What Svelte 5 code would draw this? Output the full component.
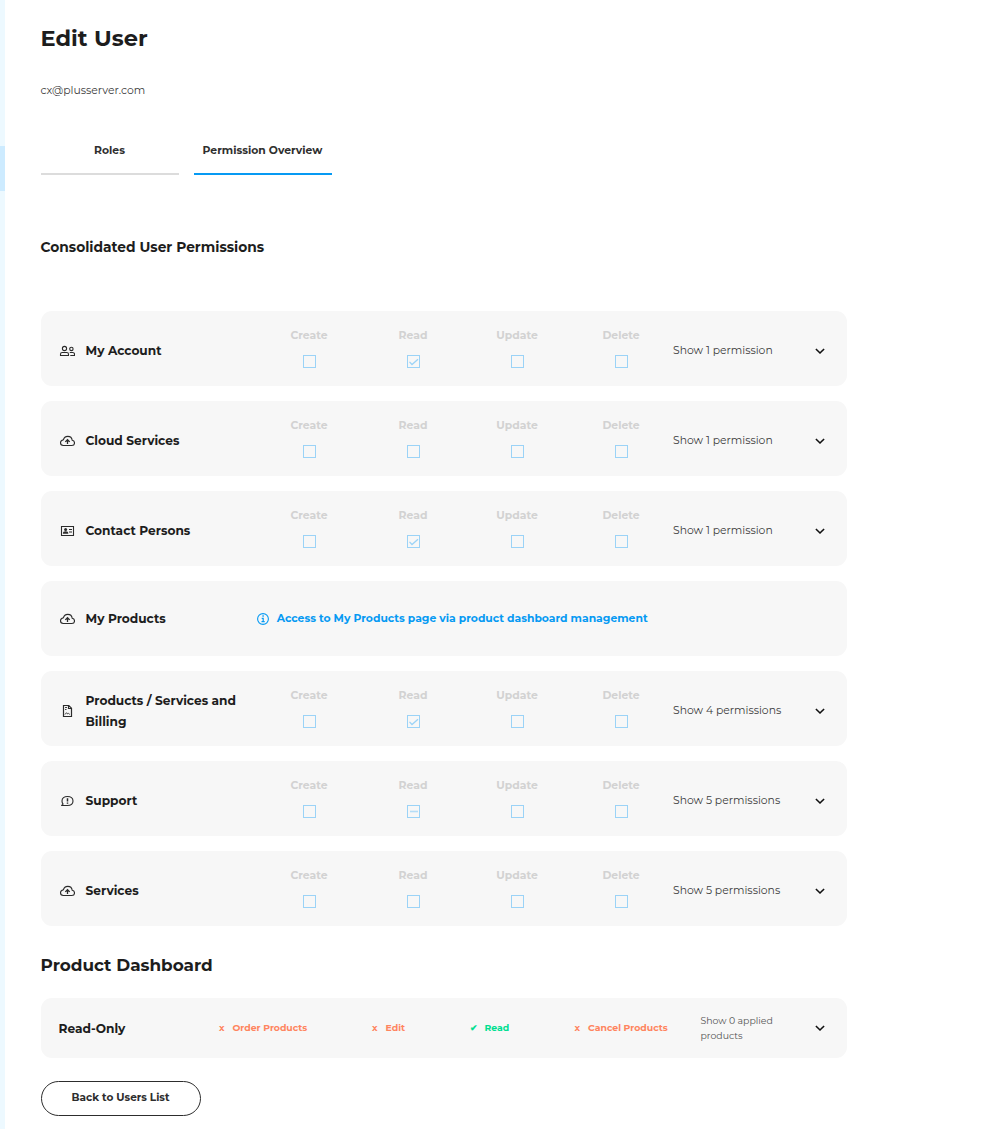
<script>
  const actions = ['Create', 'Read', 'Update', 'Delete'];
  const groups = [
    { name: 'My Account', icon: 'users', read: 'on', count: '1 permission' },
    { name: 'Cloud Services', icon: 'cloud', read: '', count: '1 permission' },
    { name: 'Contact Persons', icon: 'card', read: 'on', count: '1 permission' },
    { name: 'My Products', icon: 'cloud', note: 'Access to My Products page via product dashboard management' },
    { name: 'Products / Services and Billing', icon: 'bill', read: 'on', count: '4 permissions' },
    { name: 'Support', icon: 'support', read: 'some', count: '5 permissions' },
    { name: 'Services', icon: 'cloud', read: '', count: '5 permissions' }
  ];
</script>

{#snippet glyph(kind)}
  <svg class="glyph" width="16" height="16" viewBox="0 0 16 16" fill="none" stroke="#2b2b2b" stroke-width="1.1">
    {#if kind === 'users'}
      <circle cx="5.500" cy="5.500" r="2.100" />
      <circle cx="12.400" cy="5.900" r="1.700" />
      <path d="M1.500 12.500v-1.300q0-1.700 1.700-1.700h4.600q1.700 0 1.700 1.700v1.300zM10.800 9.500h2.900q1.800 0 1.800 1.700v1.300h-4.200" />
    {:else if kind === 'cloud'}
      <path d="M4.300 12.500h8.600c1.600 0 2.600-1 2.600-2.500s-1-2.500-2.300-2.700C12.900 4.900 11.100 3.400 8.800 3.400c-2.200 0-3.900 1.300-4.400 3.400C2.500 7.300 1.500 8.400 1.500 9.800c0 1.700 1.100 2.700 2.800 2.700z" />
      <path d="M8.500 11V7M6.300 8.900l2.200-2.200 2.200 2.200" stroke-width="1.300" />
    {:else if kind === 'card'}
      <path d="M2.500 3.500h12v9h-12z" />
      <path d="M10 6.500h3M10 9h3" />
      <circle cx="6.600" cy="6.400" r="1.500" fill="#2b2b2b" stroke="none" />
      <path d="M3.900 10.700q0-2.400 2.700-2.400t2.700 2.400z" fill="#2b2b2b" stroke="none" />
    {:else if kind === 'bill'}
      <path d="M4.500 2.500h5.300l2.700 2.700v8.300h-8zM9.500 2.500v3h3" stroke-width="1.200" />
      <path d="M6 4.500h2M6 6.500h1.500M6 11.500l1.500-1.800 1.200 1.300.8-.6 1.300 1" stroke-width=".9" />
    {:else}
      <path d="M2.200 12.500h6.100c3.500 0 5.700-1.900 5.700-4.500S11.800 3.500 8.500 3.500 3 5.400 3 8c0 1.300.4 2.300 1.100 3.100q-.5 1.100-1.900 1.400z" />
      <path d="M8.500 5.200v3.300M8.500 9.500v1.300" stroke-width="1.500" />
    {/if}
  </svg>
{/snippet}

{#snippet chevron()}
  <svg class="chevron" width="10" height="7" viewBox="0 0 10 7" fill="none" stroke="#111" stroke-width="1.600">
    <path d="M.9 1L5 5l4.100-4" />
  </svg>
{/snippet}

<div class="page">
  <aside><div class="current"></div></aside>
  <main>
    <h1>Edit User</h1>
    <p class="email">cx@plusserver.com</p>
    <nav>
      <a class="tab"><span>Roles</span></a>
      <a class="tab active"><span>Permission Overview</span></a>
    </nav>
    <h3>Consolidated User Permissions</h3>

    <section class="groups">
      {#each groups as g}
        <article class="card" class:plain={g.note}>
          <div class="name">
            {@render glyph(g.icon)}
            <strong>{g.name}</strong>
          </div>
          {#if g.note}
            <div class="note">
              <svg width="12" height="12" viewBox="0 0 12 12" fill="none" stroke="#069af3">
                <circle cx="6" cy="6" r="5.400" stroke-width="1.100" />
                <path d="M4.700 5.300h1.500v3.400M4.500 8.600h3.200" stroke-width="1.200" />
                <path d="M5.400 3.100h1.400" stroke-width="1.500" />
              </svg>
              <span>{g.note}</span>
            </div>
          {:else}
            {#each actions as a}
              <div class="action">
                <span>{a}</span>
                <i class="box">
                  {#if a === 'Read' && g.read}
                    <svg width="11" height="11" viewBox="0 0 11 11" fill="none" stroke="#9bd3f7">
                      {#if g.read === 'on'}
                        <path d="M1.500 5.900l2.500 2.600L10 3.200" stroke-width="1.300" />
                      {:else}
                        <path d="M2 5.500h8" stroke-width="1.600" stroke="#b5ddf7" />
                      {/if}
                    </svg>
                  {/if}
                </i>
              </div>
            {/each}
            <span class="show">Show {g.count}</span>
            {@render chevron()}
          {/if}
        </article>
      {/each}
    </section>

    <h2>Product Dashboard</h2>
    <article class="card role">
      <strong>Read-Only</strong>
      <span class="flag order"><b>x</b><span>Order Products</span></span>
      <span class="flag edit"><b>x</b><span>Edit</span></span>
      <span class="flag yes"><b>✔</b><span>Read</span></span>
      <span class="flag cancel"><b>x</b><span>Cancel Products</span></span>
      <span class="applied">Show 0 applied<br />products</span>
      {@render chevron()}
    </article>
    <button>Back to Users List</button>
  </main>
</div>

<style>
  :global(body) { background: #fff; }
  .page {
    display: flex; height: 1129px; overflow: hidden; color: #1d1d1d;
    font-family: Montserrat, Inter, sans-serif; white-space: nowrap;
  }
  aside { flex: none; width: 5px; background: #edf9ff; padding-top: 146px; box-sizing: border-box; }
  .current { height: 45px; background: #cdebff; }
  main { width: 806px; padding: 24px 0 0 36px; }
  h1, h2, h3, p { margin: 0 0 0 -.5px; }
  h1 { font-size: 22.500px; line-height: 28px; font-weight: 700; }
  .email { margin-top: 31px; font-size: 10.820px; line-height: 16px; color: #3c3c3c; }
  nav { display: flex; gap: 15px; margin-top: 41px; }
  .tab {
    width: 138px; height: 35px; box-sizing: border-box; border-bottom: 2px solid #dcdcdc; padding: 1px 1px 0 0;
    text-align: center; font-size: 10.820px; line-height: 20px; font-weight: 700; color: #2f2f2f;
  }
  .tab.active { border-color: #069af3; }
  h3 { margin-top: 62px; font-size: 13.800px; line-height: 20px; font-weight: 700; }
  .groups { display: grid; gap: 15px; margin-top: 54px; }
  .card {
    display: flex; align-items: center; height: 75px; box-sizing: border-box;
    padding: 4px 22px 0 18px; border-radius: 11px; background: #f7f7f7;
  }
  .plain { padding-top: 0; }
  .name { display: flex; align-items: center; width: 198px; white-space: normal; }
  .glyph { flex: none; }
  .name strong { margin-left: 10.500px; width: 165px; font-size: 12.200px; line-height: 21px; font-weight: 700; }
  .note { display: flex; align-items: center; gap: 8px; color: #069af3; font-size: 10.820px; font-weight: 700; }
  .note span { line-height: 16px; margin: 0 0 0 -.3px; }
  .action {
    display: flex; flex-direction: column; align-items: center; width: 104px; height: 48px;
    gap: 12px; color: #d2d2d2; font-size: 10.820px; line-height: 18px; font-weight: 700;
  }
  .action span { height: 16px; }
  .box { width: 11px; height: 11px; margin-left: 1px; border: 1px solid #9bd3f7; display: block; }
  .box svg { display: block; }
  .show { width: 142px; margin-top: -1px; font-size: 10.820px; line-height: 17px; color: #3c3c3c; }
  .chevron { flex: none; margin-left: auto; margin-top: 1px; }
  h2 { margin-top: 27px; font-size: 16.850px; line-height: 24px; font-weight: 700; }
  .role { height: 60px; margin-top: 21px; padding: 0 22px 0 17.500px; }
  .role strong { width: 160.500px; font-size: 12.200px; }
  .flag { display: flex; margin-top: -2px; color: #ff855f; font-size: 9.300px; font-weight: 700; }
  .flag b { width: 13.500px; font-weight: 700; }
  .order { width: 153px; }
  .edit { width: 98px; }
  .yes { width: 104.500px; color: #00df91; }
  .yes b { width: 14.500px; }
  .cancel { width: 126px; }
  .applied { font-size: 9.350px; line-height: 15px; color: #555; }
  button {
    display: block; margin-top: 23px; width: 160px; height: 35px; padding: 0 1px 3px 0; border: 1px solid #2d2d2d;
    border-radius: 18px; background: #fff; color: #2d2d2d; font: 700 10.500px Montserrat, Inter, sans-serif;
  }
</style>
